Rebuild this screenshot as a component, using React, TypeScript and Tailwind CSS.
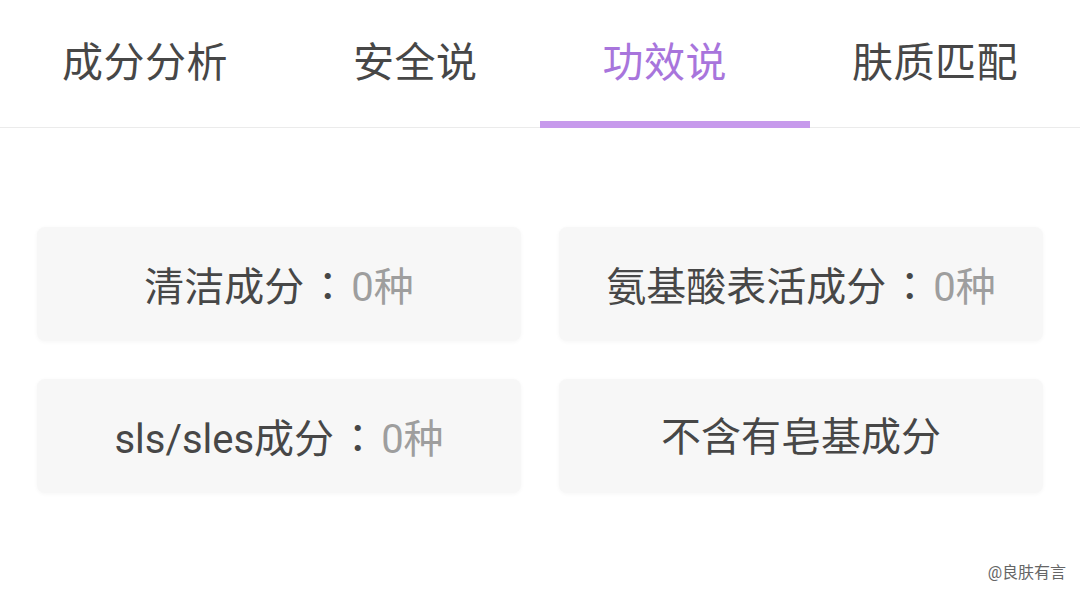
import React from "react"

const tabs = ["成分分析", "安全说", "功效说", "肤质匹配"]
const active = 2

type Item = { label: string; count?: string }

const items: Item[] = [
  { label: "清洁成分", count: "0种" },
  { label: "氨基酸表活成分", count: "0种" },
  { label: "sls/sles成分", count: "0种" },
  { label: "不含有皂基成分" },
]

export default function App() {
  return (
    <div
      className="relative w-[1080px] h-[593px] bg-white overflow-hidden"
      style={{ fontFamily: 'Roboto, "Noto Sans CJK SC", sans-serif' }}
    >
      {/* tab bar */}
      <div className="relative flex justify-between items-center h-[128px] px-[62px] border-b border-[#ebebeb]">
        {tabs.map((t, i) => (
          <span
            key={t}
            className={
              "text-[41px] leading-none tracking-[0.5px] " +
              (i === active ? "text-[#a875dc]" : "text-[#474747]")
            }
          >
            {t}
          </span>
        ))}
        <div className="absolute left-[540px] w-[270px] -bottom-px h-[7px] bg-[#c79aec]" />
      </div>

      {/* cards */}
      <div className="grid grid-cols-2 gap-[38px] px-[37px] pt-[99px]">
        {items.map((it) => (
          <div
            key={it.label}
            className="h-[114px] pt-[4px] rounded-[8px] bg-[#f7f7f7] shadow-[0_1px_4px_rgba(0,0,0,0.04)] flex items-center justify-center"
          >
            <span className="text-[40px] leading-none text-[#474747]">
              {it.label}
              {it.count && (
                <>
                  <span className="inline-block w-[47px] text-center font-['Noto_Sans_CJK_TC',sans-serif]">：</span>
                  <span className="text-[#9e9e9e]">{it.count}</span>
                </>
              )}
            </span>
          </div>
        ))}
      </div>

      {/* watermark */}
      <div className="absolute right-[14px] bottom-[12px] text-[16px] leading-none text-[#666]">@良肤有言</div>
    </div>
  )
}
